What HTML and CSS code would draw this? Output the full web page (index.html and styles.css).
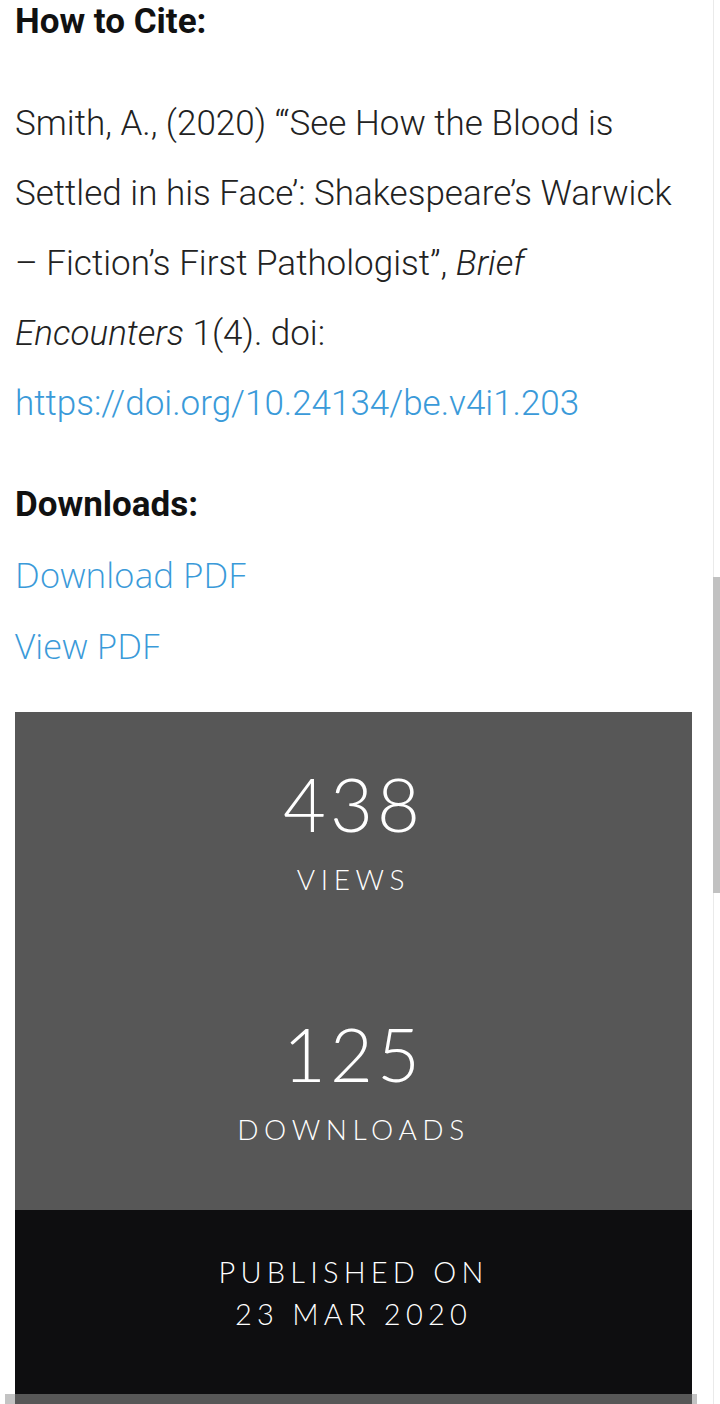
FILE: index.html
```html
<!DOCTYPE html>
<html lang="en">
<head>
  <meta charset="UTF-8">
  <meta name="viewport" content="width=device-width, initial-scale=1.0">
  <title>Article details</title>
  <link rel="stylesheet" href="styles.css">
</head>
<body>
  <div class="page">
    <section class="cite">
      <h2 class="label">How to Cite:</h2>
      <p class="citation">
        Smith, A., (2020) “‘See How the Blood is Settled in his Face’: Shakespeare’s Warwick – Fiction’s First Pathologist”, <em>Brief Encounters</em> 1(4). doi: <a href="https://doi.org/10.24134/be.v4i1.203">https://doi.org/10.24134/be.v4i1.203</a>
      </p>
    </section>

    <section class="downloads">
      <h2 class="label">Downloads:</h2>
      <ul class="download-list">
        <li><a href="#">Download PDF</a></li>
        <li><a href="#">View PDF</a></li>
      </ul>
    </section>

    <div class="stats">
      <div class="stat">
        <div class="stat-number">438</div>
        <div class="stat-label">Views</div>
      </div>
      <div class="stat">
        <div class="stat-number">125</div>
        <div class="stat-label">Downloads</div>
      </div>
    </div>

    <div class="published">
      <p>Published on</p>
      <p>23 Mar 2020</p>
    </div>

    <div class="stats stats-next"></div>
  </div>

  <div class="scroll-track"></div>
  <div class="scroll-thumb"></div>
  <div class="hscroll"></div>
</body>
</html>
```

FILE: styles.css
```css
html, body {
  overflow: hidden;
}

body {
  margin: 0;
  background-color: #FFFFFF;
  color: #222;
  font-family: 'Roboto', 'Liberation Sans', sans-serif;
}

.page {
  width: 677px;
  padding: 1px 0 0 15px;
}

.label {
  margin: 0;
  font-size: 35px;
  line-height: 41px;
  font-weight: 700;
  color: #111;
}

.citation {
  margin: 47px 0 0;
  font-size: 35px;
  line-height: 70px;
  font-weight: 300;
}

.citation em {
  font-style: italic;
}

a {
  color: #3A9AD9;
  text-decoration: none;
}

.downloads {
  margin-top: 45px;
}

.download-list {
  list-style: none;
  margin: 14px 0 0;
  padding: 0;
}

.download-list li {
  font-family: 'Open Sans', sans-serif;
  font-size: 35px;
  line-height: 71px;
  font-weight: 300;
}

.stats {
  margin-top: 31px;
  padding: 52px 0 61px;
  background-color: #575757;
  color: #FFFFFF;
  text-align: center;
  font-family: 'Lato', sans-serif;
  font-weight: 300;
}

.stat + .stat {
  margin-top: 115px;
}

.stat-number {
  font-size: 74px;
  line-height: 80px;
  letter-spacing: 4px;
}

.stat-label {
  margin-top: 15px;
  font-size: 28px;
  line-height: 40px;
  letter-spacing: 0.2em;
  text-transform: uppercase;
}

.published {
  padding: 41px 0 59px;
  background-color: #0E0E10;
  color: #FFFFFF;
  text-align: center;
  font-family: 'Lato', sans-serif;
  font-weight: 300;
  font-size: 29px;
  line-height: 42px;
  letter-spacing: 0.18em;
  text-transform: uppercase;
}

.published p {
  margin: 0;
}

.stats-next {
  margin-top: 0;
  padding: 0;
  height: 10px;
}

/* fake browser scrollbars */
.scroll-track {
  position: fixed;
  top: 0;
  left: 713px;
  width: 1px;
  height: 100%;
  background-color: #EAEAEA;
}

.scroll-thumb {
  position: fixed;
  top: 577px;
  left: 713px;
  width: 7px;
  height: 316px;
  background-color: #C1C1C1;
}

.hscroll {
  position: fixed;
  left: 5px;
  bottom: 0;
  width: 692px;
  height: 10px;
  background-color: #C3C3C3;
  mix-blend-mode: darken;
}
```
